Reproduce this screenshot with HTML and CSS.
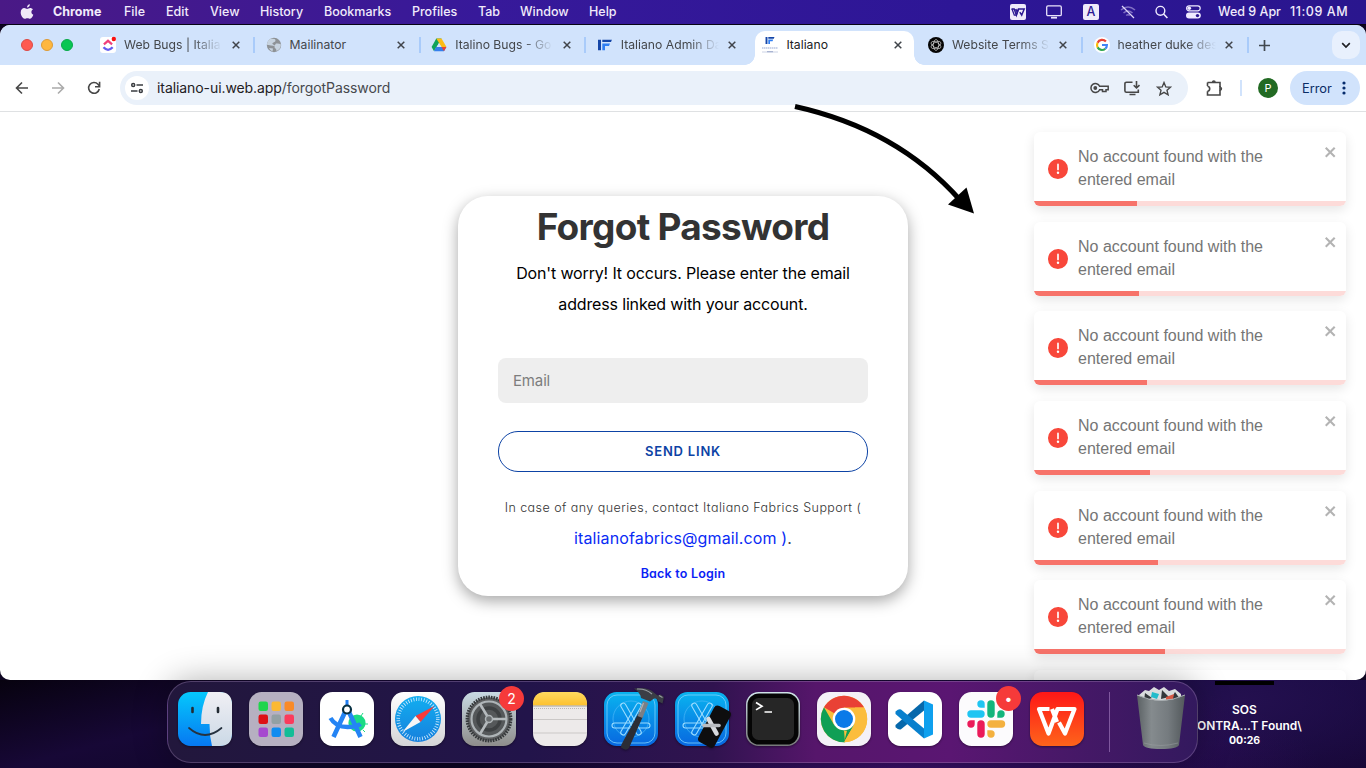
FILE: index.html
```html
<!DOCTYPE html>
<html lang="en">
<head>
<meta charset="utf-8">
<title>Italiano</title>
<link rel="stylesheet" href="styles.css">
</head>
<body>
<svg class="defs" width="0" height="0">
  <symbol id="close" viewBox="0 0 8 8"><path d="M.7.7l6.6 6.6M7.3.7L.7 7.3" stroke="currentColor" stroke-width="1.500" fill="none"/></symbol>
  <symbol id="toast-close" viewBox="0 0 14 16"><path fill="currentColor" fill-rule="evenodd" d="M7.71 8.23l3.75 3.75-1.48 1.48-3.75-3.75-3.75 3.75L1 11.98l3.75-3.75L1 4.48 2.48 3l3.75 3.75L9.98 3l1.48 1.48-3.75 3.75z"/></symbol>
  <symbol id="alert" viewBox="0 0 24 24"><path fill="#f8473a" d="M11.983 0a12.206 12.206 0 00-8.51 3.653A11.8 11.8 0 000 12.207 11.779 11.779 0 0011.8 24h.214A12.111 12.111 0 0024 11.791 11.766 11.766 0 0011.983 0zM10.5 16.542a1.476 1.476 0 011.449-1.53h.027a1.527 1.527 0 011.523 1.47 1.475 1.475 0 01-1.449 1.53h-.027a1.529 1.529 0 01-1.523-1.47zM11 12.5v-6a1 1 0 012 0v6a1 1 0 11-2 0z"/></symbol>
  <symbol id="if" viewBox="0 0 14 11"><path d="M0 0h3v11H0zM4.3 0H14l-1 2.6H4.3z" fill="#1546a8"/><path d="M4.3 4H12l-1 2.6H7V11H4.3z" fill="#2f7ef2"/></symbol>
  <symbol id="appstore" viewBox="0 0 54 54">
    <rect width="54" height="54" rx="12.500" fill="url(#blue)"/>
    <rect x="3" y="3" width="48" height="48" rx="10" fill="none" stroke="#7fd2fb" stroke-width=".8"/>
    <circle cx="27" cy="27" r="18" fill="none" stroke="#4cb8f8" stroke-width=".7"/>
    <g fill="none" stroke="#9adcff" stroke-width="1.100"><rect x="8" y="31" width="38" height="5" rx="2.500"/><rect x="24.500" y="9" width="5" height="36" rx="2.500" transform="rotate(30 27 27)"/><rect x="24.500" y="9" width="5" height="36" rx="2.500" transform="rotate(-30 27 27)"/></g>
  </symbol>
  <defs>
    <linearGradient id="blue" x2="0" y2="1"><stop stop-color="#09b4ef"/><stop offset="1" stop-color="#0867e0"/></linearGradient>
    <linearGradient id="finder" x2="0" y2="1"><stop stop-color="#05c8fc"/><stop offset="1" stop-color="#0678f2"/></linearGradient>
    <linearGradient id="face" x2="0" y2="1"><stop stop-color="#f0eff4"/><stop offset="1" stop-color="#cbd9e6"/></linearGradient>
    <linearGradient id="silver" x2="0" y2="1"><stop stop-color="#c9dae3"/><stop offset="1" stop-color="#8e8d8b"/></linearGradient>
    <linearGradient id="pale" x2="0" y2="1"><stop stop-color="#fff"/><stop offset="1" stop-color="#d4d4d6"/></linearGradient>
    <linearGradient id="safari" x2="0" y2="1"><stop stop-color="#12aef0"/><stop offset="1" stop-color="#1680dd"/></linearGradient>
    <linearGradient id="notes" x2="0" y2="1"><stop stop-color="#ffd95e"/><stop offset="1" stop-color="#fdc130"/></linearGradient>
    <linearGradient id="wps" x2="0" y2="1"><stop stop-color="#fe1717"/><stop offset="1" stop-color="#fe641b"/></linearGradient>
    <linearGradient id="bin" x2="1" y2="0"><stop stop-color="#5b6164"/><stop offset=".3" stop-color="#858b8e"/><stop offset=".65" stop-color="#757b7f"/><stop offset="1" stop-color="#53595c"/></linearGradient>
    <linearGradient id="rim" x2="0" y2="1"><stop stop-color="#d0e3ea"/><stop offset="1" stop-color="#77797a"/></linearGradient>
  </defs>
</svg>

<header class="menubar">
  <svg class="apple" width="14" height="16" viewBox="0 0 14 16"><path fill="#f0e9f8" d="M9.900.3c.1 1.800-1.300 3.300-2.900 3.300C6.900 2 8.300.4 9.900.3zM12.900 5.500c-1 .6-1.500 1.500-1.500 2.500 0 1.300.8 2.300 1.900 2.800-.5 1.500-1.700 4-3.200 4-1 0-1.500-.6-2.700-.6s-1.700.6-2.700.6C2.900 14.800.7 11.600.7 8.600c0-2.800 1.700-4.500 3.500-4.500 1.200 0 2.200.8 2.900.8s1.800-.9 3.200-.9c.9 0 1.900.5 2.600 1.500z"/></svg>
  <b>Chrome</b><span>File</span><span>Edit</span><span>View</span><span>History</span><span>Bookmarks</span><span>Profiles</span><span>Tab</span><span>Window</span><span>Help</span>
  <div class="status">
    <svg width="16" height="16" viewBox="0 0 16 16"><rect width="16" height="16" rx="2" fill="#efeafa"/><path d="M1.500 5h2.700l2.200 6.200L8.500 5h5.700l-2.500 6.200-1.900-3M5.800 5l1.300 3" fill="none" stroke="#2c1792" stroke-width="1.500"/><path d="M2 5l2.300 6.200h2L8.500 5" fill="none" stroke="#2c1792" stroke-width="1.300"/></svg>
    <svg width="16" height="14" viewBox="0 0 16 14"><rect x=".7" y=".9" width="14.600" height="9.800" rx="1.300" fill="none" stroke="#e9e2fa" stroke-width="1.300"/><path d="M5 12.700h6" stroke="#e9e2fa" stroke-width="1.800"/></svg>
    <span class="lang">A</span>
    <svg width="16" height="14" viewBox="0 0 16 14"><path d="M1 5q7-6 14 0M3.500 8q4.500-4 9 0M6.200 10.500q1.800-1.500 3.600 0" fill="none" stroke="#8070c3" stroke-width="1.600"/><path d="M2 1l12 12" stroke="#ded7f8" stroke-width="1.200"/></svg>
    <svg width="13" height="14" viewBox="0 0 13 14"><circle cx="5.400" cy="5.800" r="4.400" fill="none" stroke="#f0ebff" stroke-width="1.400"/><path d="M8.600 9l3.800 4" stroke="#f0ebff" stroke-width="1.600"/></svg>
    <svg width="15" height="14" viewBox="0 0 15 14"><rect x=".6" y=".8" width="13.600" height="5" rx="2.500" fill="none" stroke="#f0ebff" stroke-width="1.200"/><circle cx="3.300" cy="3.300" r="1.800" fill="#f0ebff"/><rect y="7.600" width="14.800" height="6" rx="3" fill="#f0ebff"/><circle cx="11.500" cy="10.600" r="1.700" fill="#2c1792"/></svg>
    <span class="date">Wed 9 Apr</span><span class="time">11:09 AM</span>
  </div>
</header>

<main class="window">
  <nav class="tabs">
    <div class="lights"><i class="red"></i><i class="amber"></i><i class="green"></i></div>
    <div class="tab">
      <svg width="16" height="16" viewBox="0 0 16 16"><rect width="16" height="16" rx="3" fill="#fff"/><path d="M3.900 7.300L8 3.800l4.100 3.500" fill="none" stroke="#f0417c" stroke-width="2.200"/><path d="M3.500 10.300q4.500 5 9.200 0" fill="none" stroke="#655df0" stroke-width="2.300"/><circle cx="13.800" cy="2" r="2.200" fill="#fa1010"/></svg>
      <span class="title fade">Web Bugs | Italia</span><svg class="x"><use href="#close"/></svg>
    </div>
    <div class="tab">
      <svg width="16" height="16" viewBox="0 0 16 16"><circle cx="8" cy="8" r="7.200" fill="#8e9296"/><path d="M5 1.500q4 0 4.500 1.500T7.500 5.500 8 8 5 8.500 1 7q.5-4 4-5.500zM10 6.500q3-.5 5 1-.5 5-4.500 6.500 0-2-1.500-3t1-4.500zM3 11l4 .5-.5 3Q4 13.500 3 11z" fill="#c7d3df"/></svg>
      <span class="title">Mailinator</span><svg class="x"><use href="#close"/></svg>
    </div>
    <div class="tab">
      <svg width="16" height="16" viewBox="0 0 16 16"><path d="M5.300 1.500h5.200L5.300 10.500 3 14.300.6 10z" fill="#10a35c"/><path d="M5.300 1.500h5.200L15.500 10h-5z" fill="#fbbc16"/><path d="M5 10h10.400L13 14.300H3z" fill="#347fed"/><path d="M10.500 10h4.900L13 14.300z" fill="#e94436"/><path d="M8 6.200l2.300 3.800H5.700z" fill="#d1e3fc"/></svg>
      <span class="title fade">Italino Bugs - Go</span><svg class="x"><use href="#close"/></svg>
    </div>
    <div class="tab nosep">
      <svg width="16" height="16" viewBox="0 0 16 16"><use href="#if" x="1" y="2.500" width="14" height="11"/></svg>
      <span class="title fade">Italiano Admin Da</span><svg class="x"><use href="#close"/></svg>
    </div>
    <div class="tab active">
      <svg width="16" height="16" viewBox="0 0 16 16"><use href="#if" x="3" y="0" width="10" height="7"/><path d="M0 11h16" stroke="#b9c5e2" stroke-width="1.500" stroke-dasharray="1.500 .5"/><path d="M0 15h16" stroke="#ccd3e5" stroke-width="1"/><path d="M5 14.700h6" stroke="#a9b4d1" stroke-width="1.300"/></svg>
      <span class="title">Italiano</span><svg class="x"><use href="#close"/></svg>
    </div>
    <div class="tab">
      <svg width="16" height="16" viewBox="0 0 16 16"><circle cx="8" cy="8" r="8" fill="#050505"/><g fill="none" stroke="#d2d2d2" stroke-width=".7"><ellipse cx="8" cy="8" rx="2.700" ry="5.400"/><ellipse cx="8" cy="8" rx="2.700" ry="5.400" transform="rotate(60 8 8)"/><ellipse cx="8" cy="8" rx="2.700" ry="5.400" transform="rotate(120 8 8)"/></g></svg>
      <span class="title fade">Website Terms S</span><svg class="x"><use href="#close"/></svg>
    </div>
    <div class="tab">
      <svg width="16" height="16" viewBox="0 0 16 16"><circle cx="8" cy="8" r="8" fill="#fff"/><g fill="none" stroke-width="2.200"><path d="M11.900 4.500A5 5 0 0 0 3.600 5.700" stroke="#ea4335"/><path d="M3.600 5.700a5 5 0 0 0 0 4.700" stroke="#fbbc05"/><path d="M3.600 10.400a5 5 0 0 0 7.700 1.300" stroke="#34a853"/><path d="M11.300 11.700Q12.900 10.400 12.900 8H8" stroke="#4285f4"/></g></svg>
      <span class="title fade">heather duke des</span><svg class="x"><use href="#close"/></svg>
    </div>
    <svg class="plus" width="11" height="11" viewBox="0 0 11 11"><path d="M5.500 0v11M0 5.500h11" stroke="#41484f" stroke-width="1.700"/></svg>
    <div class="tabsearch"><svg width="10" height="7" viewBox="0 0 10 7"><path d="M1.200 1.200L5 5l3.800-3.800" fill="none" stroke="#1f2024" stroke-width="1.700"/></svg></div>
  </nav>

  <div class="toolbar">
    <svg class="nav" viewBox="0 0 14 14"><path d="M13 7H2M7 1.500L1.500 7 7 12.500" fill="none" stroke="#474747" stroke-width="1.600"/></svg>
    <svg class="nav" viewBox="0 0 14 14"><path d="M1 7h11M7 1.500L12.500 7 7 12.500" fill="none" stroke="#ababab" stroke-width="1.600"/></svg>
    <svg class="nav" viewBox="0 0 14 14"><path d="M12.300 8A5.400 5.400 0 1 1 11 3.200L12.500 5" fill="none" stroke="#474747" stroke-width="1.600"/><path d="M12.600.8v4.900H8" fill="none" stroke="#474747" stroke-width="1.600"/></svg>
    <div class="omnibox">
      <div class="site"><svg width="12" height="12" viewBox="0 0 12 12"><g fill="none" stroke="#3a3c40" stroke-width="1.500"><circle cx="2.200" cy="3" r="1.500"/><path d="M5.500 3H12M0 9h6.500"/><circle cx="9.800" cy="9" r="1.500"/></g></svg></div>
      <span class="url"><em>italiano-ui.web.app</em>/forgotPassword</span>
      <svg width="19" height="12" viewBox="0 0 19 12"><path d="M9.600 4.300A4.500 4.500 0 1 0 9.600 7.700H12.500V9.500h3.500V7.700h2.200V4.300z" fill="none" stroke="#474747" stroke-width="1.500"/><circle cx="5.300" cy="6" r="1.900" fill="#474747"/></svg>
      <svg width="17" height="15" viewBox="0 0 17 15"><path d="M8.500 1.200h-6q-1.600 0-1.600 1.500v7q0 1.500 1.600 1.500h11.800V8.500M5.500 13.500h6M12.500 0v7M9.700 4.200L12.500 7l3-2.800" fill="none" stroke="#474747" stroke-width="1.600"/></svg>
      <svg width="16" height="15" viewBox="0 0 16 15"><path d="M8 1.500l1.800 4.400 4.700.3L11 9.300l1.100 4.600L8 11.400l-4.100 2.500L5 9.300 1.500 6.200l4.700-.3z" fill="none" stroke="#474747" stroke-width="1.400"/></svg>
    </div>
    <svg class="ext" width="17" height="17" viewBox="0 0 17 17"><path d="M1.500 2.500H14V7M14 10.500V15H1.500v-3.700M1.500 6V2.500M1.500 6.200q2.200.4 2.200 2.500t-2.200 2.500" fill="none" stroke="#474747" stroke-width="1.600"/><path d="M5.800 2.300a2 2 0 0 1 4 0zM14.200 6.700a2 2 0 0 1 0 4z" fill="#474747"/><path d="M14 6v5" stroke="#474747" stroke-width="1.600"/></svg>
    <i class="rule"></i>
    <span class="avatar">P</span>
    <div class="error">Error<svg width="4" height="14" viewBox="0 0 4 14"><g fill="#062c6d"><circle cx="2" cy="2" r="1.600"/><circle cx="2" cy="7" r="1.600"/><circle cx="2" cy="12" r="1.600"/></g></svg></div>
  </div>

  <section class="page">
    <form class="card">
      <h1>Forgot Password</h1>
      <p class="intro">Don't worry! It occurs. Please enter the email<br>address linked with your account.</p>
      <input type="text" placeholder="Email">
      <button type="button">SEND LINK</button>
      <p class="help">In case of any queries, contact Italiano Fabrics Support (</p>
      <p class="mail">italianofabrics@gmail.com )<span>.</span></p>
      <a class="back">Back to Login</a>
    </form>
    <aside class="toasts">
      <div class="toast"><svg class="alert"><use href="#alert"/></svg><p>No account found with the entered email</p><svg class="tx"><use href="#toast-close"/></svg><div class="track"><div class="bar" style="width:103px"></div></div></div>
      <div class="toast"><svg class="alert"><use href="#alert"/></svg><p>No account found with the entered email</p><svg class="tx"><use href="#toast-close"/></svg><div class="track"><div class="bar" style="width:105px"></div></div></div>
      <div class="toast"><svg class="alert"><use href="#alert"/></svg><p>No account found with the entered email</p><svg class="tx"><use href="#toast-close"/></svg><div class="track"><div class="bar" style="width:113px"></div></div></div>
      <div class="toast"><svg class="alert"><use href="#alert"/></svg><p>No account found with the entered email</p><svg class="tx"><use href="#toast-close"/></svg><div class="track"><div class="bar" style="width:116px"></div></div></div>
      <div class="toast"><svg class="alert"><use href="#alert"/></svg><p>No account found with the entered email</p><svg class="tx"><use href="#toast-close"/></svg><div class="track"><div class="bar" style="width:124px"></div></div></div>
      <div class="toast"><svg class="alert"><use href="#alert"/></svg><p>No account found with the entered email</p><svg class="tx"><use href="#toast-close"/></svg><div class="track"><div class="bar" style="width:131px"></div></div></div>
      <div class="toast"></div>
    </aside>
  </section>
</main>

<footer class="shelf">
  <div class="dock">
    <svg class="app" viewBox="0 0 54 54"><rect width="54" height="54" rx="12.500" fill="url(#finder)"/><path d="M30 0h11.500Q54 0 54 12.500v29Q54 54 41.500 54H34q-2.500-10-2.500-22H23Q23 14 30 0z" fill="url(#face)"/><path d="M14.500 16v4M40 16v4" stroke="#222b33" stroke-width="2.600" stroke-linecap="round"/><path d="M11 36q16 14 32.500 0" fill="none" stroke="#26323f" stroke-width="1.700" stroke-linecap="round"/></svg>
    <svg class="app" viewBox="0 0 54 54"><rect width="54" height="54" rx="12.500" fill="#b6b0c1"/><g><rect x="9.500" y="9.500" width="9.500" height="9.500" rx="2.200" fill="#20d54d"/><rect x="22.500" y="9.500" width="9.500" height="9.500" rx="2.200" fill="#fbb934"/><rect x="35.500" y="9.500" width="9.500" height="9.500" rx="2.200" fill="#f98a27"/><rect x="9.500" y="22.500" width="9.500" height="9.500" rx="2.200" fill="#dd1015"/><rect x="22.500" y="22.500" width="9.500" height="9.500" rx="2.200" fill="#93a0a4"/><rect x="35.500" y="22.500" width="9.500" height="9.500" rx="2.200" fill="#fb3b5c"/><rect x="9.500" y="35.500" width="9.500" height="9.500" rx="2.200" fill="#a649cf"/><rect x="22.500" y="35.500" width="9.500" height="9.500" rx="2.200" fill="#108cf0"/><rect x="35.500" y="35.500" width="9.500" height="9.500" rx="2.200" fill="#13bd97"/></g></svg>
    <svg class="app" viewBox="0 0 54 54"><rect width="54" height="54" rx="12.500" fill="#fff"/><circle cx="37" cy="31" r="8.600" fill="#1adb84"/><path d="M41 24l2-3M45 32h3M43 38l2 2" stroke="#1adb84" stroke-width="1"/><path d="M25.500 8h3v8h-3z" fill="#1f7df0"/><path d="M25.500 19L13.500 45M28.500 19l12 26" stroke="#2484f4" stroke-width="4.600"/><path d="M10.500 26q5 9 17 9 9 0 13-3" fill="none" stroke="#2484f4" stroke-width="4.400"/><circle cx="27" cy="17.500" r="4" fill="#fff" stroke="#073042" stroke-width="2.200"/></svg>
    <svg class="app" viewBox="0 0 54 54"><rect width="54" height="54" rx="12.500" fill="url(#pale)"/><circle cx="27" cy="27" r="23" fill="url(#safari)"/><circle cx="27" cy="27" r="19.800" fill="none" stroke="#d6eeff" stroke-width="3.600" stroke-dasharray=".8 1.792"/><path d="M43.500 14L29.500 30 24.500 24z" fill="#f83b3b"/><path d="M11.500 40l13-16 5 6z" fill="#f6f6f6"/></svg>
    <div class="badged"><svg class="app" viewBox="0 0 54 54"><rect width="54" height="54" rx="12.500" fill="url(#silver)"/><circle cx="27" cy="27" r="21.700" fill="#5d5f61"/><circle cx="27" cy="27" r="21.800" fill="none" stroke="#35383a" stroke-width="3.200" stroke-dasharray="1.600 1"/><circle cx="27" cy="27" r="17.500" fill="#55585a" stroke="#aeb4b7" stroke-width="2.200"/><circle cx="27" cy="27" r="11" fill="none" stroke="#3e4143" stroke-width="3.500"/><path d="M27 27h17M27 27L18 12M27 27L18 42" stroke="#b5babd" stroke-width="2.600"/><circle cx="27" cy="27" r="3.500" fill="#6a6e70" stroke="#aeb4b7" stroke-width="1.500"/></svg><span class="badge">2</span></div>
    <svg class="app" viewBox="0 0 54 54"><rect width="54" height="54" rx="12.500" fill="#edeaea"/><path d="M0 13.500v-1Q0 0 12.500 0h29Q54 0 54 12.500v1z" fill="url(#notes)"/><path d="M0 14h54" stroke="#aaa49a" stroke-width="1"/><path d="M1 16.500h52" stroke="#bcb8b5" stroke-width="1" stroke-dasharray="1 1"/><path d="M0 27.500h54M0 41h54" stroke="#cbc8c7" stroke-width="1"/></svg>
    <svg class="app" viewBox="0 0 54 54"><use href="#appstore" width="54" height="54"/><path d="M34 22l5 2.200L25 56q-3 3.500-8-.5 0-3 1.500-5z" fill="#2b2d35"/><path d="M33.500 24l5.500-15 5.500 2-6 15z" fill="#7a7f85"/><path d="M36 20l3.500-9" stroke="#adb2b7" stroke-width="1.200"/><path d="M30-3.500q14-2 20.500 4.500l3 2.500 3-1 3.500 2.500-1.500 6.500-5-2.500q.5-3-3.500-2.500l-4 3-9-3.500q-.500-5-7-9.500z" fill="#3b3e46"/><path d="M33-3q9-.5 15 5M55 3.500l3.500 2" stroke="#989da2" stroke-width="1.100" fill="none"/></svg>
    <svg class="app" viewBox="0 0 54 54"><use href="#appstore" width="54" height="54"/><rect x="30" y="14" width="18.500" height="41" rx="4" transform="rotate(28 39 35)" fill="#0e0e0f"/><path d="M33.500 27l8 14.500" stroke="#d8dade" stroke-width="4.600" stroke-linecap="round"/><path d="M29 33.500h15" stroke="#b9bcc1" stroke-width="3.600" stroke-linecap="round"/></svg>
    <svg class="app" viewBox="0 0 54 54"><rect width="54" height="54" rx="12.500" fill="url(#rim)"/><rect x="1.500" y="1.500" width="51" height="51" rx="11.500" fill="#050505"/><rect x="6" y="6" width="42" height="42" rx="6.500" fill="#262626"/><path d="M10 10.500l6 3.700-6 3.700M18.500 20h7.500" fill="none" stroke="#fff" stroke-width="1.700"/></svg>
    <svg class="app" viewBox="0 0 54 54"><rect width="54" height="54" rx="12.500" fill="#f4f1f7"/><circle cx="27" cy="27" r="23.200" fill="#fbbd3d"/><path d="M27 27L7 15.200A23.200 23.200 0 0 1 47.100 15.500H27z" fill="#e94135"/><path d="M7 15.200L17 32.800 27 38.500l1 11.700A23.200 23.200 0 0 1 7 15.200z" fill="#109f55"/><path d="M27 50.200l10-17.500L27 27 17 32.800l10 5.700 3 .2z" fill="#109f55"/><path d="M27 50.200L37 32.900 38 15.500h9.100A23.200 23.200 0 0 1 27 50.200z" fill="#fbbd3d"/><circle cx="27" cy="27" r="11.300" fill="#fff"/><circle cx="27" cy="27" r="9" fill="#0b7ae8"/></svg>
    <svg class="app" viewBox="0 0 54 54"><rect width="54" height="54" rx="12.500" fill="#fff"/><path d="M36 8.500l9 4v30l-9 4z" fill="#0ea0ee"/><path d="M36 8.500v10L13 37.200q-2 1.200-5.500-2V33z" fill="#0668ab"/><path d="M36 46.500v-10L13 17.500q-2-1.200-5.500 2V22z" fill="#0880cd"/></svg>
    <div class="badged"><svg class="app" viewBox="0 0 54 54"><rect width="54" height="54" rx="12.500" fill="#fcfbfd"/><g stroke-width="7.400" stroke-linecap="round"><path d="M12 22h10" stroke="#1fc5f2"/><path d="M32 12v10" stroke="#14b57c"/><path d="M22 32v10" stroke="#eb1b5a"/><path d="M32 32h10.500" stroke="#f4b13f"/></g><path d="M25.700 15.700h-3.700a3.700 3.700 0 1 1 3.700-3.700z" fill="#1fc5f2"/><path d="M38.300 25.700V22a3.700 3.700 0 1 1 3.700 3.700z" fill="#14b57c"/><path d="M15.700 28.300V32a3.700 3.700 0 1 1-3.700-3.700z" fill="#eb1b5a"/><path d="M28.300 38.300H32a3.700 3.700 0 1 1-3.700 3.700z" fill="#f4b13f"/></svg><span class="badge">•</span></div>
    <svg class="app" viewBox="0 0 54 54"><rect width="54" height="54" rx="12.500" fill="url(#wps)"/><path d="M19.500 17H9l9.500 24.500L27.500 17h17L35 41.500l-6-11M22 17l5 13" fill="none" stroke="#fff" stroke-width="4.200" stroke-linejoin="round"/></svg>
    <i class="divider"></i>
    <svg class="trash" width="50" height="64" viewBox="0 0 50 64"><path d="M3 9l6-5 4 1 5-4 5 3 5-3 5 4 6-2 6 5v8H4z" fill="#d9dcdd"/><path d="M9 7l7 5-8 3zM26 4l7 7-8 2zM39 6l5 7h-9z" fill="#33383b"/><path d="M16 6l7 2-2 5-6-2z" fill="#22bccb"/><path d="M30 11l8-3-1 5-7 1z" fill="#d85a46"/><path d="M1 9q24 11 48 0L43 59q-2 4-18 4T7 59z" fill="url(#bin)"/><path d="M1 9q24 11 48 0" fill="none" stroke="#a9afb2" stroke-width="1"/><path d="M8 57q16 5 34 0" fill="none" stroke="#9ba0a3" stroke-width="1" opacity=".5"/></svg>
  </div>
  <div class="desktop-item"><i class="stub"></i><b class="sos">SOS</b><b class="file">ONTRA...T Found\</b><b class="clock">00:26</b></div>
</footer>

<svg class="arrow" width="184" height="114" viewBox="793 102 184 114"><path d="M795 106.500Q897 129 960 200" fill="none" stroke="#000" stroke-width="5"/><path d="M974 213.500l-7.500-26-18.500 17z"/></svg>
</body>
</html>
```

FILE: styles.css
```css
* { box-sizing: border-box; }
body {
  margin: 0; width: 1366px; height: 768px; overflow: hidden; position: relative;
  display: flex; flex-direction: column;
  font-family: Inter, "Liberation Sans", sans-serif; background: #0d0521;
}
p, h1 { margin: 0; }
svg { flex: none; overflow: visible; }
.defs { position: absolute; }

/* system menu bar */
.menubar {
  height: 25px; flex: none; display: grid; align-items: center;
  grid-template-columns: 33px 71px 42px 44px 50px 64px 88px 66px 42px 69px 60px 1fr;
  padding: 0 14px 1px 20px; font-size: 12.500px; color: #f1ebfb; font-weight: 500;
  background: linear-gradient(90deg, #4a1986, #37199a 35%, #2d1696 70%, #2a168e);
  border-bottom: 1px solid #060314; white-space: nowrap;
}
.menubar b { font-weight: 700; }
.status { display: flex; align-items: center; justify-content: flex-end; }
.status svg:nth-child(1) { margin-right: 20px; }
.status svg:nth-child(2) { margin-right: 21px; }
.lang { width: 16px; height: 16px; background: #efeafa; color: #2c1792; border-radius: 2px; text-align: center; line-height: 16px; margin-right: 21px; }
.status svg:nth-child(4) { margin-right: 19px; }
.status svg:nth-child(5) { margin-right: 18px; }
.status svg:nth-child(6) { margin-right: 17px; }
.date { width: 72px; }
.time { width: 62px; letter-spacing: .55px; }

/* browser window */
.window { height: 655px; flex: none; background: #fff; border-radius: 10px; overflow: hidden; display: flex; flex-direction: column; }
.tabs { height: 40px; flex: none; background: #d1e3fc; display: flex; align-items: center; }
.lights { width: 89.500px; padding-left: 21px; display: flex; gap: 8px; flex: none; }
.lights i { width: 12px; height: 12px; border-radius: 50%; }
.red { background: #fe5a52; border: .5px solid #dc4a45; }
.amber { background: #feb73f; border: .5px solid #dd9b37; }
.green { background: #09c653; border: .5px solid #08a948; }
.tab { position: relative; width: 165.600px; height: 16px; flex: none; display: flex; align-items: center; padding-left: 10.500px; border-right: 2px solid #a9cbfa; color: #44474b; font-size: 12.200px; }
.tab.nosep { border-color: transparent; }
.tab .title { width: 102px; margin-left: 8px; white-space: nowrap; line-height: 18px; }
.tab .fade { -webkit-mask-image: linear-gradient(90deg, #000 68px, transparent 98px); mask-image: linear-gradient(90deg, #000 68px, transparent 98px); }
.tab .x { width: 8px; height: 8px; margin-left: 5.500px; color: #40444a; }
.tab.active { width: 159.600px; height: 34px; margin: 6px 3px 0; padding: 0 0 6px 7.500px; border: 0; background: #fff; border-radius: 10px 10px 0 0; color: #202124; }
.tab.active::before, .tab.active::after { content: ""; position: absolute; bottom: 0; width: 10px; height: 10px; }
.tab.active::before { left: -10px; background: radial-gradient(circle at 0 0, transparent 9.500px, #fff 10px); }
.tab.active::after { right: -10px; background: radial-gradient(circle at 100% 0, transparent 9.500px, #fff 10px); }
.plus { margin-left: 10px; }
.tabsearch { width: 28px; height: 28px; margin-left: auto; margin-right: 6px; border-radius: 10px; background: #e8f0fd; display: flex; align-items: center; justify-content: center; }

.toolbar { height: 47px; flex: none; border-bottom: 1px solid #dfe1e3; display: flex; align-items: center; padding-left: 15px; background: #fff; }
.nav { width: 14px; height: 14px; margin-right: 22px; }
.nav:nth-child(3) { margin-right: 19px; }
.omnibox { width: 1068px; height: 34px; border-radius: 17px; background: #eaf1fa; display: flex; align-items: center; padding: 0 16px 0 5px; gap: 15px; }
.site { width: 24px; height: 24px; border-radius: 50%; background: #fff; display: flex; align-items: center; justify-content: center; }
.url { flex: 1; margin: -2px 0 0 -7px; font-size: 14px; letter-spacing: -.08px; color: #47494d; }
.url em { font-style: normal; color: #1f2023; }
.ext { margin-left: 18px; }
.rule { width: 2px; height: 16px; background: #d1e3fc; margin: 0 16px 0 17px; }
.avatar { width: 20px; height: 20px; border-radius: 50%; background: #226a23; color: #fff; font-size: 11px; line-height: 20px; text-align: center; }
.error { width: 70px; height: 34px; border-radius: 17px; background: #d1e3fc; margin-left: 12px; display: flex; align-items: center; gap: 10px; padding-left: 12px; font-size: 12.800px; color: #0a2c66; }

/* page */
.page { flex: 1; position: relative; display: flex; justify-content: center; align-items: flex-start; padding-top: 84px; }
.card { width: 450px; height: 400px; border-radius: 30px; box-shadow: 0 5px 15px rgba(0,0,0,.35); background: #fff; display: flex; flex-direction: column; align-items: center; padding: 8px 40px 0; text-align: center; }
h1 { font-size: 37px; line-height: 46px; color: #333; font-weight: 700; white-space: nowrap; letter-spacing: -.72px; }
.intro { font-size: 16px; line-height: 31px; color: #000; margin-top: 8px; white-space: nowrap; letter-spacing: -.15px; }
input { width: 370px; height: 45px; margin-top: 38px; flex: none; background: #eee; border: 0; border-radius: 8px; padding: 0 15px; font: 15px Inter, sans-serif; letter-spacing: -.15px; }
input::placeholder { color: #7d7d7d; }
button { width: 370px; height: 41px; flex: none; margin-top: 28px; background: #fff; border: 1px solid #0d43a5; border-radius: 20px; color: #0d43a5; font: 600 13px Inter, sans-serif; letter-spacing: .8px; padding-bottom: 3px; }
.help, .back { font-feature-settings: "cv11", "ss03"; }
.help { font-size: 12.500px; line-height: 20px; margin-top: 26px; color: #333; letter-spacing: .45px; white-space: nowrap; font-weight: 300; }
.mail { font-size: 16px; line-height: 30px; margin-top: 5px; color: #0a2bf5; letter-spacing: .12px; white-space: nowrap; }
.mail span { color: #444; }
.back { margin-top: 11px; font-size: 12.500px; line-height: 20px; color: #0a1ff5; font-weight: 600; letter-spacing: .2px; }

/* notifications lie over the page */
.toasts { position: absolute; right: 20px; top: 20px; width: 312px; display: flex; flex-direction: column; gap: 15.700px; font-family: "Liberation Sans", Arial, sans-serif; }
.toast { height: 74px; flex: none; border-radius: 6px; overflow: hidden; background: #fff; box-shadow: 0 4px 12px rgba(0,0,0,.1); display: grid; grid-template: 69px 5px / 44px 1fr 27px; }
.alert { width: 20px; height: 20px; margin: 27px 0 0 14px; }
.toast p { margin-top: 13px; font-size: 16px; line-height: 23px; color: #757575; width: 200px; }
.tx { width: 14px; height: 16px; margin: 12px 0 0 5px; color: #b3b3b3; }
.track { grid-column: 1 / 4; background: #fddbd9; }
.bar { height: 5px; background: #f7736a; }

/* dock */
.shelf {
  height: 88px; position: relative; display: flex; justify-content: center; padding: 1px 1px 0 0;
  background:
    radial-gradient(ellipse 420px 110px at 900px 100%, rgba(89,20,135,.55), transparent),
    radial-gradient(ellipse 220px 90px at 1240px 20px, #24104f, transparent),
    linear-gradient(165deg, #07020f 0, #170836 20%, #0d0523 45%, #160a42 75%, #170736);
}
.dock {
  position: relative; z-index: 2; width: 1031px; height: 82px; border: 1px solid rgba(170,140,190,.35); border-radius: 24px;
  background: linear-gradient(90deg, #22173c 0, #22144a 35%, #30134f 53%, #56166b 63%, #5a1672 76%, #481868 87%, #33195e);
  box-shadow: 0 0 34px rgba(0,0,0,.32);
  display: flex; gap: 17px; padding: 10px 0 0 10px;
}
.app { width: 54px; height: 54px; flex: none; filter: drop-shadow(0 1px 1px rgba(0,0,0,.4)); }
.badged { position: relative; width: 54px; height: 54px; flex: none; }
.badge { position: absolute; left: 37px; top: -6px; width: 25px; height: 25px; border-radius: 50%; background: #f63a3a; color: #fff; font-size: 14px; line-height: 25px; text-align: center; }
.divider { width: 1px; height: 60px; margin-left: 8px; background: rgba(190,150,215,.5); flex: none; }
.trash { margin: -6px 0 0 9px; }
.desktop-item { position: absolute; left: 1197px; top: 1px; width: 105px; display: flex; flex-direction: column; color: #fff; white-space: nowrap; font-size: 12px; }
.stub { width: 59px; height: 4px; background: #000; margin-left: 18px; }
.sos { font-weight: 600; line-height: 16px; margin: 17px 0 0 35px; }
.file { font-weight: 600; line-height: 16px; letter-spacing: -.05px; }
.clock { font-size: 10.500px; line-height: 14px; margin-left: 32px; }

.arrow { position: absolute; left: 793px; top: 102px; z-index: 5; }
```
